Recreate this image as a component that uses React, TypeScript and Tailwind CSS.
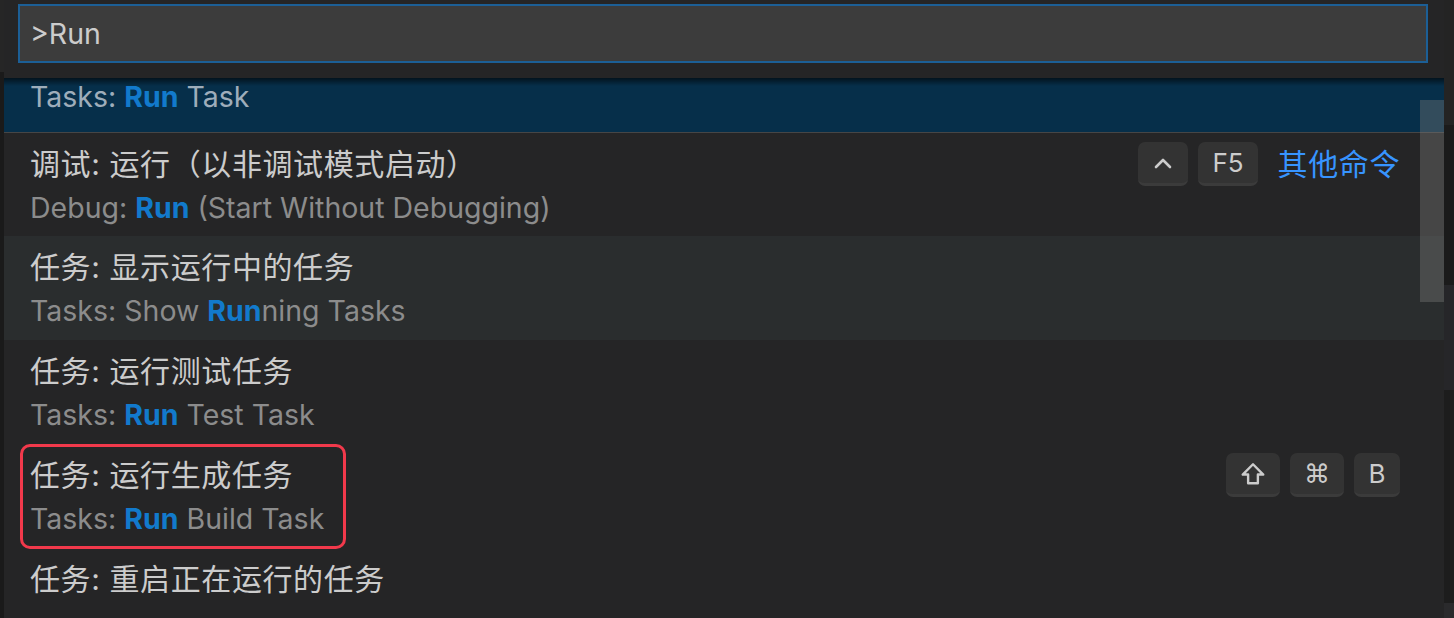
import React from "react"

type Part = { t: string; hl?: boolean }

type Item = {
    label?: string
    detail?: Part[]
    keys?: React.ReactNode[]
    other?: boolean
    selected?: boolean
    hover?: boolean
    separator?: boolean
}

const CaretIcon = () => (
    <svg width="22" height="14" viewBox="0 0 22 14" fill="none">
        <path d="M4 11 L11 4 L18 11" stroke="#cccccc" strokeWidth="2.6" strokeLinecap="round" strokeLinejoin="round" />
    </svg>
)

const ShiftIcon = () => (
    <svg width="26" height="26" viewBox="0 0 24 24" fill="none">
        <path d="M12 3 L2.5 12.5 H7.5 V20.5 H16.5 V12.5 H21.5 Z" stroke="#cccccc" strokeWidth="2.2" strokeLinejoin="round" />
    </svg>
)

const items: Item[] = [
    // first row is scrolled up, only its second line shows under the input
    { detail: [{ t: "Tasks: " }, { t: "Run", hl: true }, { t: " Task" }], selected: true },
    {
        label: "调试: 运行（以非调试模式启动）",
        detail: [{ t: "Debug: " }, { t: "Run", hl: true }, { t: " (Start Without Debugging)" }],
        keys: [<CaretIcon key="c" />, "F5"],
        other: true,
        separator: true,
    },
    {
        label: "任务: 显示运行中的任务",
        detail: [{ t: "Tasks: Show " }, { t: "Run", hl: true }, { t: "ning Tasks" }],
        hover: true,
    },
    { label: "任务: 运行测试任务", detail: [{ t: "Tasks: " }, { t: "Run", hl: true }, { t: " Test Task" }] },
    {
        label: "任务: 运行生成任务",
        detail: [{ t: "Tasks: " }, { t: "Run", hl: true }, { t: " Build Task" }],
        keys: [<ShiftIcon key="s" />, <span key="m" className="font-['DejaVu_Sans',sans-serif] text-[26px]">⌘</span>, "B"],
    },
    // second line sits below the visible area
    { label: "任务: 重启正在运行的任务" },
]

function Key({ children }: { children: React.ReactNode }) {
    return (
        <div className="h-[44px] min-w-[46px] px-[14px] flex items-center justify-center rounded-[7px] bg-[#333333] border-b-[3px] border-[#3b3b3b] text-[#cccccc] text-[26px] leading-none">
            {children}
        </div>
    )
}

function Row({ item }: { item: Item }) {
    const bg = item.selected ? "bg-[#062f4a]" : item.hover ? "bg-[#2a2d2e]" : ""
    return (
        <div
            className={`${bg} ${item.separator ? "border-t border-[#464646]" : ""} ${
                item.selected ? "pt-[3px]" : "pt-[9px]"
            } h-[104px] flex pl-[26px] pr-[44px]`}
        >
            <div className="flex-1 flex flex-col">
                <div className="h-[44px] flex items-center text-[30px] tracking-[0.6px] text-[#cccccc] whitespace-pre">
                    {item.label}
                </div>
                {item.detail && (
                    <div
                        className={`h-[44px] flex items-center text-[28.5px] whitespace-pre ${
                            item.selected ? "text-[#9eadba]" : "text-[#8c8c8c]"
                        }`}
                    >
                        {item.detail.map((p, i) =>
                            p.hl ? (
                                <span key={i} className="font-bold text-[#127acc]">
                                    {p.t}
                                </span>
                            ) : (
                                <span key={i}>{p.t}</span>
                            )
                        )}
                    </div>
                )}
            </div>
            {item.keys && (
                <div className="h-[44px] flex items-center gap-[10px]">
                    {item.keys.map((k, i) => (
                        <Key key={i}>{k}</Key>
                    ))}
                    {item.other && <span className="ml-[10px] text-[30px] tracking-[0.6px] text-[#3794ff]">其他命令</span>}
                </div>
            )}
        </div>
    )
}

export default function App() {
    return (
        <div className="relative w-[1454px] h-[618px] flex overflow-hidden bg-[#1b1b1b] font-['Inter','Noto_Sans_CJK_SC',sans-serif]">
            {/* editor edge on the left */}
            <div className="w-[4px] flex flex-col">
                <div className="h-[72px] bg-[#262626]" />
                <div className="flex-1 bg-[#1a1a1a]" />
            </div>

            {/* quick pick panel */}
            <div className="relative w-[1440px] flex flex-col bg-[#252526]">
                <div className="h-[78px] shrink-0 pt-[4px] pl-[14px] pr-[16px]">
                    <div className="h-[59px] flex items-center bg-[#3c3c3c] border-2 border-[#1c5f96] pl-[10px] pt-[2px] text-[28.5px] text-[#cccccc]">
                        &gt;Run
                    </div>
                </div>
                <div className="relative flex-1 overflow-hidden">
                    <div className="mt-[-50px]">
                        {items.map((it, i) => (
                            <Row key={i} item={it} />
                        ))}
                    </div>
                    <div className="absolute inset-x-0 top-0 h-[8px] bg-gradient-to-b from-[#00000099] to-transparent" />
                    <div className="absolute right-0 top-[22px] w-[24px] h-[202px] bg-[rgba(121,121,121,0.4)]" />
                </div>
            </div>

            {/* editor edge on the right */}
            <div className="w-[10px] flex flex-col">
                <div className="h-[125px] bg-[#242424]" />
                <div className="h-[160px] bg-[#1b1b1b]" />
                <div className="h-[105px] bg-[#262629]" />
                <div className="flex-1 bg-[#1d1d1d]" />
                <div className="h-[15px] bg-[#2a2a2c]" />
            </div>

            {/* red annotation box */}
            <div className="absolute left-[20px] top-[444px] w-[326px] h-[105px] rounded-[10px] border-[3px] border-[#f2394b]" />
        </div>
    )
}
